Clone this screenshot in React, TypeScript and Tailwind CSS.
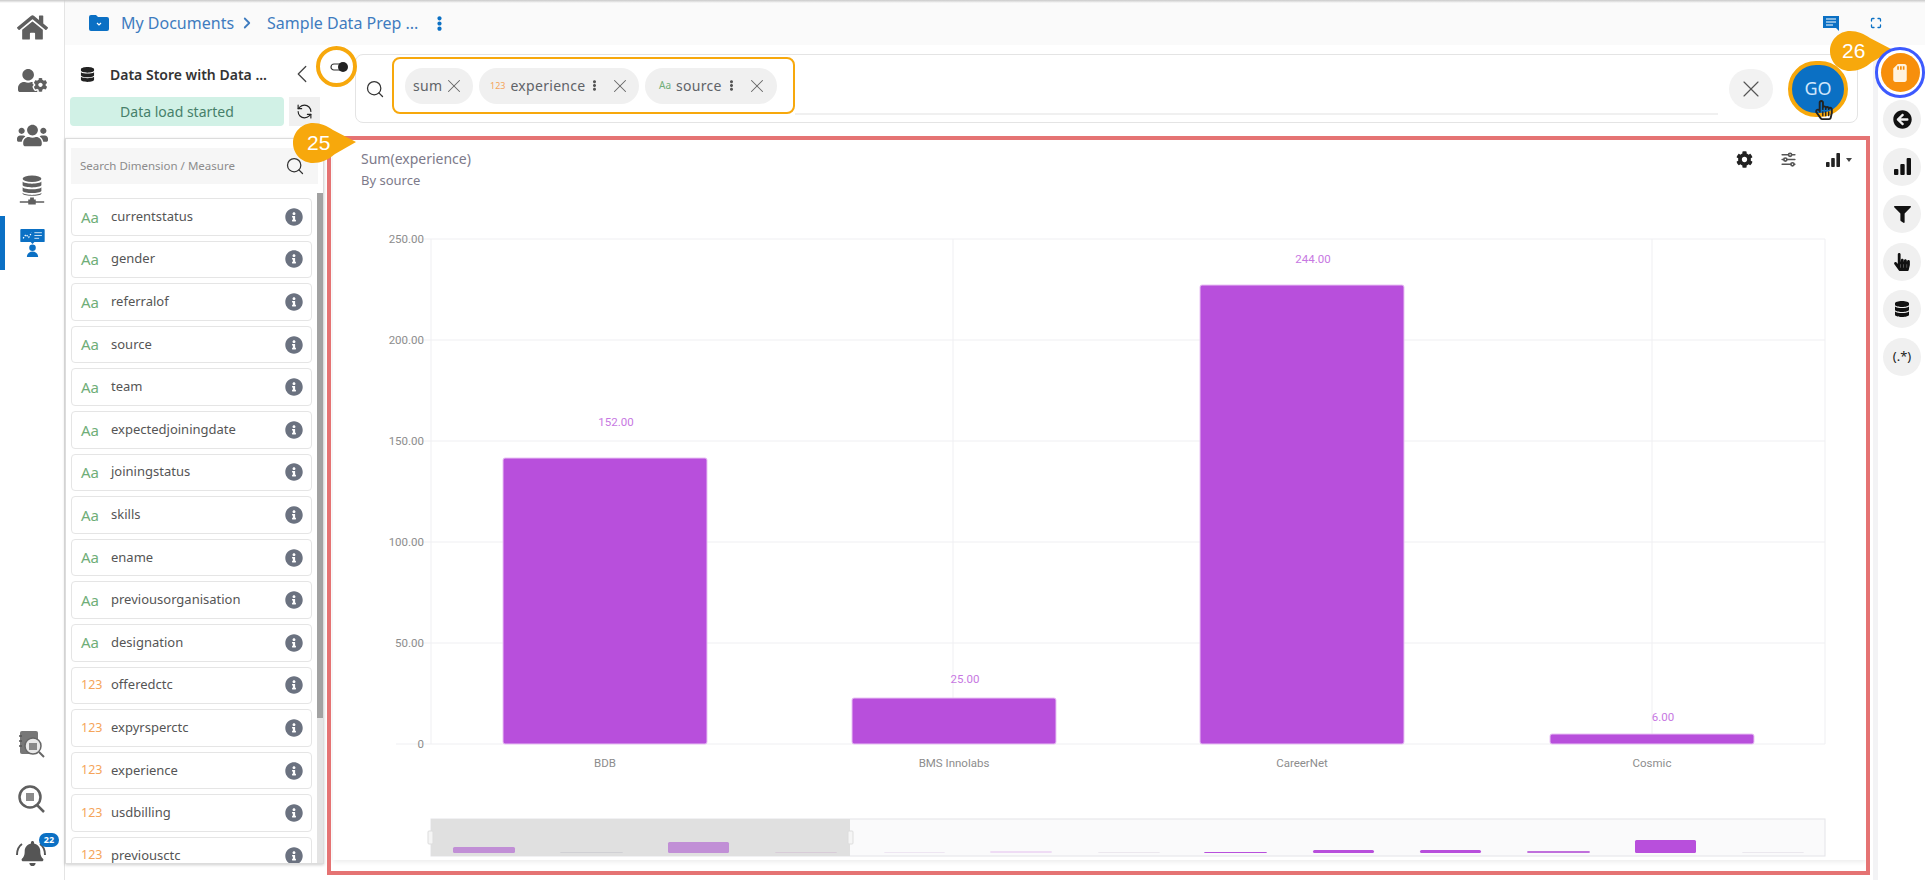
import { ReactNode } from 'react';
import { FaArrowCircleLeft, FaBell, FaCog, FaDatabase, FaEllipsisV, FaFilter, FaHandPointer, FaHome, FaInfoCircle, FaRegHandPointer, FaSdCard, FaUserCog, FaUsers } from 'react-icons/fa';
import { TbAdjustmentsHorizontal } from 'react-icons/tb';
import { ChevronLeft, ChevronRight, Maximize, RefreshCcw, Search, X } from 'lucide-react';

const fields: [string, string][] = [
  ['Aa', 'currentstatus'],
  ['Aa', 'gender'],
  ['Aa', 'referralof'],
  ['Aa', 'source'],
  ['Aa', 'team'],
  ['Aa', 'expectedjoiningdate'],
  ['Aa', 'joiningstatus'],
  ['Aa', 'skills'],
  ['Aa', 'ename'],
  ['Aa', 'previousorganisation'],
  ['Aa', 'designation'],
  ['123', 'offeredctc'],
  ['123', 'expyrsperctc'],
  ['123', 'experience'],
  ['123', 'usdbilling'],
  ['123', 'previousctc'],
];

const bars = [
  { name: 'BDB', value: '152.00', x: 503, top: 458, labelY: 426 },
  { name: 'BMS Innolabs', value: '25.00', x: 852, top: 698, labelY: 683 },
  { name: 'CareerNet', value: '244.00', x: 1200, top: 285, labelY: 263 },
  { name: 'Cosmic', value: '6.00', x: 1550, top: 734, labelY: 721 },
];

const ticks = [
  ['250.00', 239],
  ['200.00', 340],
  ['150.00', 441],
  ['100.00', 542],
  ['50.00', 643],
  ['0', 744],
] as const;

// overview strip under the chart: x, width, height, colour
const miniBars = [
  [453, 62, 6, '#c18fd6'],
  [560, 63, 1, '#d0d0d4'],
  [668, 61, 11, '#c18fd6'],
  [775, 62, 1, '#d8ccd8'],
  [884, 61, 1, '#eee6f2'],
  [990, 62, 2, '#efdcf5'],
  [1098, 62, 1, '#ece8ee'],
  [1204, 63, 1, '#b84fdc'],
  [1313, 61, 3, '#b84fdc'],
  [1420, 61, 3, '#b84fdc'],
  [1527, 63, 2, '#c070dc'],
  [1635, 61, 13, '#b84fdc'],
  [1742, 62, 1, '#ebe8ee'],
] as const;

function SignalBars({ size }: { size: number }) {
  return (
    <svg width={size} height={size} viewBox="0 0 14 14" fill="currentColor">
      <rect x="0" y="9" width="3.600" height="5" rx="0.800" />
      <rect x="5.200" y="5" width="3.600" height="9" rx="0.800" />
      <rect x="10.400" y="0" width="3.600" height="14" rx="0.800" />
    </svg>
  );
}

function Chip({ type, label, menu, className }: { type?: string; label: string; menu?: boolean; className: string }) {
  return (
    <div className={`flex h-[36px] shrink-0 items-center rounded-full bg-[#f0f0f0] text-[14px] tracking-[0.3px] text-[#5f6368] ${className}`}>
      {type === '123' && <span className="mr-[5px] text-[9px] tracking-normal text-[#f5a55a]">123</span>}
      {type === 'Aa' && <span className="mr-[5px] text-[10px] tracking-normal text-[#6fae78]">Aa</span>}
      <span>{label}</span>
      <div className="ml-auto flex items-center">
        {menu && <FaEllipsisV className="mr-[9px] text-[11px] text-[#555]" />}
        <X className="h-[22px] w-[22px] text-[#666]" strokeWidth={1.100} />
      </div>
    </div>
  );
}

function RailButton({ children }: { children: ReactNode }) {
  return <div className="flex h-[38px] w-[38px] items-center justify-center rounded-full bg-[#f0f0f0] text-[#111]">{children}</div>;
}

function Callout({ label, className, textClass }: { label: string; className: string; textClass: string }) {
  return (
    <div className={`absolute h-[40px] w-[64px] ${className}`}>
      <svg width="64" height="40" viewBox="0 0 64 40" className="absolute inset-0">
        <path d="M20 0 C28 0 34 3 40 7 L63 19 L42 31 C35 37 28 40 20 40 C9 40 0 31 0 20 C0 9 9 0 20 0 Z" fill="#f7a80c" />
      </svg>
      <span className={`absolute top-[7px] text-[21px] leading-[26px] text-white ${textClass}`} style={{ fontFamily: 'Liberation Sans, sans-serif' }}>{label}</span>
    </div>
  );
}

function Chart() {
  return (
    <svg viewBox="333 192 1533 668" className="h-[668px] w-[1533px] shrink-0" style={{ fontFamily: 'Roboto, sans-serif' }}>
      {ticks.map(([label, y]) => (
        <g key={label}>
          <line x1="396" x2="1825" y1={y} y2={y} stroke="#efeff2" />
          <text x="424" y={y + 4} textAnchor="end" fontSize="11.5" fill="#8d8d8d">{label}</text>
        </g>
      ))}
      <line x1="431" x2="431" y1="239" y2="744" stroke="#efeff2" />
      <line x1="1825" x2="1825" y1="239" y2="744" stroke="#efeff2" />
      <line x1="953" x2="953" y1="239" y2="744" stroke="#efeff2" />
      <line x1="1652" x2="1652" y1="239" y2="744" stroke="#efeff2" />
      {bars.map((b) => (
        <g key={b.name}>
          <rect x={b.x} y={b.top} width="204" height={744 - b.top} rx="2" fill="#b84fdc" stroke="#e9c3f4" />
          <text x={b.x + 113} y={b.labelY} textAnchor="middle" fontSize="11.5" fill="#c778e2">{b.value}</text>
          <text x={b.x + 102} y="767" textAnchor="middle" fontSize="11.5" fill="#8d8d8d">{b.name}</text>
        </g>
      ))}
      <rect x="431" y="819" width="1394" height="37" fill="#fafafb" stroke="#e4e4e8" />
      <rect x="431" y="819" width="419" height="37" fill="#e0e0e0" />
      {miniBars.map(([x, w, h, color]) => (
        <rect key={x} x={x} y={853 - h} width={w} height={h} rx="1.5" fill={color} />
      ))}
      <rect x="428" y="831" width="5" height="13" rx="1" fill="#f5f5f5" stroke="#ddd" />
      <rect x="848" y="831" width="5" height="13" rx="1" fill="#f5f5f5" stroke="#ddd" />
    </svg>
  );
}

export default function App() {
  return (
    <div className="relative flex h-[880px] w-[1925px] overflow-hidden bg-white" style={{ fontFamily: '"Noto Sans", sans-serif' }}>
      <div className="absolute inset-x-0 top-0 z-10 h-[3px] bg-gradient-to-b from-[#c9c9c9] to-transparent" />

      {/* Left navigation */}
      <aside className="flex h-full w-[65px] shrink-0 flex-col items-center border-r border-[#e4e4e4] pt-[2px] text-[#5f5f5f]">
        <div className="flex h-[51px] w-full items-center justify-center"><FaHome className="text-[31px]" /></div>
        <div className="flex h-[54px] w-full items-center justify-center"><FaUserCog className="text-[29px]" /></div>
        <div className="flex h-[56px] w-full items-center justify-center"><FaUsers className="text-[31px]" /></div>
        <div className="flex h-[53px] w-full items-center justify-center">
          <svg width="28" height="30" viewBox="0 0 28 32" fill="#5f5f5f">
            <ellipse cx="14" cy="4" rx="10" ry="3.500" />
            <path d="M4 7c2 3 18 3 20 0v4c-2 3-18 3-20 0zM4 13c2 3 18 3 20 0v4c-2 3-18 3-20 0zM4 19c2 3 18 3 20 0v1c-1 3-18 3-20 0z" />
            <path d="M1 28h9v-2h2v-2h4v2h2v2h9v1.500h-9v2h-8v-2H1z" />
          </svg>
        </div>
        <div className="relative flex h-[54px] w-full items-center justify-center">
          <div className="absolute inset-y-0 left-0 w-[5px] bg-[#0b70c4]" />
          <svg width="27" height="30" viewBox="0 0 28 32">
            <rect x="1" y="1" width="26" height="14" rx="1" fill="#0b70c4" />
            <path d="M12 15h4l-2 2z" fill="#0b70c4" />
            <path d="M4 11l3-4 3 3 3-5" stroke="#fff" strokeWidth="1.300" strokeDasharray="1.500 1.500" fill="none" />
            <path d="M16 5h8M16 8h8M16 11h5" stroke="#d7e9f8" strokeWidth="1" />
            <circle cx="14" cy="21" r="3.500" fill="#0b70c4" />
            <path d="M8 31c0-8 12-8 12 0z" fill="#0b70c4" />
          </svg>
        </div>
        <div className="flex-1" />
        <div className="flex h-[54px] w-full items-center justify-center">
          <svg width="28" height="28" viewBox="0 0 28 28">
            <rect x="2" y="0" width="18" height="23" rx="2" fill="#777" />
            <path d="M1 5h3M1 10h3M1 15h3" stroke="#555" strokeWidth="1.500" />
            <circle cx="15" cy="15" r="8" fill="#e8e8e8" stroke="#666" strokeWidth="1.500" />
            <path d="M11 12h8v7h-8z" fill="#888" />
            <path d="M21 21l5 5" stroke="#666" strokeWidth="2" />
          </svg>
        </div>
        <div className="flex h-[54px] w-full items-center justify-center">
          <svg width="28" height="28" viewBox="0 0 28 28">
            <circle cx="12" cy="12" r="10.500" fill="none" stroke="#5f5f5f" strokeWidth="2.500" />
            <path d="M19 20l7 7" stroke="#5f5f5f" strokeWidth="2.500" />
            <path d="M8 8h8v8H8z" fill="#8b8b8b" />
          </svg>
        </div>
        <div className="relative flex h-[54px] w-full items-center justify-center">
          <FaBell className="text-[25px] text-[#555]" />
          <svg width="34" height="14" viewBox="0 0 34 14" className="absolute left-[14px] top-[16px]">
            <path d="M3 13C3 8 5 4 8 2M31 13C31 8 29 4 26 2" stroke="#555" strokeWidth="2" fill="none" />
          </svg>
          <span className="absolute left-[39px] top-[7px] flex h-[14px] w-[20px] items-center justify-center rounded-full bg-[#0b70c4] text-[9px] font-bold text-white">22</span>
        </div>
      </aside>

      {/* Main column */}
      <div className="flex min-w-0 flex-1 flex-col">
        <header className="flex h-[45px] shrink-0 items-center bg-[#fafafa] pl-[23px] pr-[43px] pt-[1px] text-[16px] text-[#3f7cbf]">
          <svg width="22" height="18" viewBox="0 0 22 18" className="mr-[11px]">
            <path d="M1 3a2 2 0 0 1 2-2h5l2 2h9a2 2 0 0 1 2 2v10a2 2 0 0 1-2 2H3a2 2 0 0 1-2-2z" fill="#0b70c4" />
            <path d="M9 9l2 2 2-2" stroke="#fff" strokeWidth="1.200" fill="none" />
          </svg>
          <span>My Documents</span>
          <ChevronRight className="ml-[4px] h-[18px] w-[18px]" strokeWidth={2.400} />
          <span className="ml-[11px]">Sample Data Prep ...</span>
          <FaEllipsisV className="ml-[14px] text-[15px] text-[#0b70c4]" />
          <div className="flex-1" />
          <svg width="16" height="15" viewBox="0 0 16 15">
            <path d="M0 0h16v15l-3-3H0z" fill="#0b70c4" />
            <path d="M3 3h10M3 6h10M3 9h7" stroke="#fff" strokeWidth="1.200" />
          </svg>
          <Maximize className="ml-[31px] h-[12px] w-[12px] text-[#0b70c4]" strokeWidth={2.600} />
        </header>

        <div className="flex min-h-0 flex-1">
          {/* Data store panel */}
          <section className="flex w-[261px] shrink-0 flex-col">
            <div className="flex h-[52px] shrink-0 items-center pl-[15px] pr-[9px] pt-[6px]">
              <FaDatabase className="text-[15px] text-[#222]" />
              <span className="ml-[15px] flex-1 text-[14px] font-semibold text-[#333]">Data Store with Data ...</span>
              <ChevronLeft className="h-[30px] w-[30px] text-[#444]" strokeWidth={1} />
            </div>
            <div className="flex h-[29px] shrink-0 gap-[5px] pl-[5px]">
              <div className="flex w-[214px] items-center justify-center rounded-[4px] bg-[#d1f1e6] text-[14px] text-[#47806a]">Data load started</div>
              <div className="flex w-[31px] items-center justify-center bg-[#f0f0f0]">
                <RefreshCcw className="h-[17px] w-[17px] text-[#222]" strokeWidth={1.600} />
              </div>
            </div>
            <div className="mt-[12px] flex h-[726px] w-[259px] flex-col overflow-hidden border border-[#dcdcdc] shadow-[0_1px_3px_rgba(0,0,0,0.2)]">
              <div className="mx-[5px] mt-[9px] flex h-[36px] shrink-0 items-center bg-[#f6f6f6] pl-[9px] pr-[13px] text-[11.500px] text-[#8c8c8c]">
                <span className="flex-1">Search Dimension / Measure</span>
                <Search className="h-[20px] w-[20px] text-[#333]" strokeWidth={1.500} />
              </div>
              <div className="mt-[14px] flex min-h-0 flex-1">
                <div className="flex min-w-0 flex-1 flex-col gap-[5px] overflow-hidden pl-[5px] pr-[5px]">
                  {fields.map(([type, name]) => (
                    <div key={name} className="flex h-[37.600px] shrink-0 items-center rounded-[4px] border border-[#e5e5e5] pl-[9px] pr-[8px]">
                      {type === 'Aa'
                        ? <span className="w-[30px] text-[15px] text-[#6fae78]">Aa</span>
                        : <span className="w-[30px] text-[12.500px] text-[#f5a55a]">123</span>}
                      <span className="flex-1 pb-[2px] text-[13px] leading-[18px] text-[#555]">{name}</span>
                      <FaInfoCircle className="text-[18px] text-[#6b7280]" />
                    </div>
                  ))}
                </div>
                <div className="mt-[-5px] h-[calc(100%+5px)] w-[6px] shrink-0 bg-[#e4e4e4]">
                  <div className="h-[525px] w-full bg-[#a2a2a2]" />
                </div>
              </div>
            </div>
          </section>

          {/* Search and chart */}
          <main className="flex min-w-0 flex-1 flex-col pl-[7px]">
            <div className="ml-[22px] mt-[9px] flex h-[69px] w-[1503px] shrink-0 items-center rounded-[8px] border border-[#e4e4e4] pl-[9px] pr-[9px]">
              <Search className="h-[20px] w-[20px] shrink-0 text-[#333]" strokeWidth={1.500} />
              <div className="mb-[6px] ml-[7px] flex h-[57px] w-[403px] shrink-0 items-center gap-[6px] rounded-[8px] border-2 border-[#f7a80c] pl-[11px]">
                <Chip label="sum" className="w-[68px] pl-[8px] pr-[8px]" />
                <Chip type="123" label="experience" menu className="w-[160px] pl-[11px] pr-[8px]" />
                <Chip type="Aa" label="source" menu className="w-[132px] pl-[14px] pr-[9px]" />
              </div>
              <div className="mt-[51px] h-[2px] w-[923px] shrink-0 bg-[#f0f0f0]" />
              <div className="flex-1" />
              <div className="flex h-[40px] w-[44px] shrink-0 items-center justify-center rounded-full bg-[#f2f2f2]">
                <X className="h-[28px] w-[28px] text-[#555]" strokeWidth={1} />
              </div>
              <div className="ml-[15px] flex h-[56px] w-[60px] shrink-0 items-center justify-center rounded-full border-[4px] border-[#f7a80c] bg-[#0b70c4] text-[18px] text-[#cfe6fb]">GO</div>
            </div>

            <div className="mt-[17px] flex h-[720px] w-[1533px] flex-col shadow-[0_2px_5px_rgba(0,0,0,0.08)]">
              <div className="flex h-[52px] shrink-0 items-start pl-[28px] pr-[14px] pt-[10px]">
                <div className="flex-1">
                  <div className="text-[14px] leading-[18px] text-[#7d7a8a]">Sum(experience)</div>
                  <div className="mt-[3px] text-[13px] leading-[18px] text-[#7d7a8a]">By source</div>
                </div>
                <FaCog className="mt-[1px] text-[17px] text-[#222]" />
                <TbAdjustmentsHorizontal className="ml-[26px] text-[19px] text-[#555]" />
                <div className="ml-[28px] mt-[3px] text-[#222]"><SignalBars size={14} /></div>
                <div className="ml-[6px] mt-[8px] h-0 w-0 border-x-[3.500px] border-t-[4px] border-x-transparent border-t-[#444]" />
              </div>
              <Chart />
            </div>
          </main>

          {/* Right rail */}
          <aside className="flex h-full w-[52px] shrink-0 flex-col items-center gap-[9.500px] border-l-[5px] border-[#f3f3f5] pl-[1px] pt-[55px]">
            <RailButton><FaArrowCircleLeft className="text-[19px]" /></RailButton>
            <RailButton><SignalBars size={17} /></RailButton>
            <RailButton><FaFilter className="text-[17px]" /></RailButton>
            <RailButton><FaHandPointer className="text-[18px]" /></RailButton>
            <RailButton><FaDatabase className="text-[16px]" /></RailButton>
            <RailButton><span className="text-[13px] text-[#222]">(.*)</span></RailButton>
          </aside>
        </div>
      </div>

      {/* Tutorial annotations */}
      <div className="absolute left-[327px] top-[136px] h-[739px] w-[1543px] border-[4px] border-[#e57373]" />
      <div className="absolute left-[316px] top-[46px] flex h-[41px] w-[41px] items-center justify-center rounded-full border-[4px] border-[#f7a80c] bg-white">
        <svg width="19" height="12" viewBox="0 0 19 12" className="ml-[5px]">
          <rect x="1" y="3" width="15" height="6" rx="3" fill="#fff" stroke="#333" strokeWidth="1.200" />
          <circle cx="13" cy="6" r="5" fill="#222" />
        </svg>
      </div>
      <Callout label="25" className="left-[293px] top-[123px]" textClass="left-[14px]" />
      <Callout label="26" className="left-[1830px] top-[31px]" textClass="left-[12px]" />
      <div className="absolute left-[1875px] top-[47px] flex h-[51px] w-[50px] items-center justify-center rounded-full border-[3px] border-[#3d5afe] bg-white">
        <div className="flex h-[39px] w-[39px] items-center justify-center rounded-full bg-[#f78f0c]">
          <FaSdCard className="text-[18px] text-[#fff3e0]" />
        </div>
      </div>
      <div className="absolute left-[1814px] top-[100px] text-[#222]">
        <FaRegHandPointer className="text-[20px]" />
      </div>
    </div>
  );
}
